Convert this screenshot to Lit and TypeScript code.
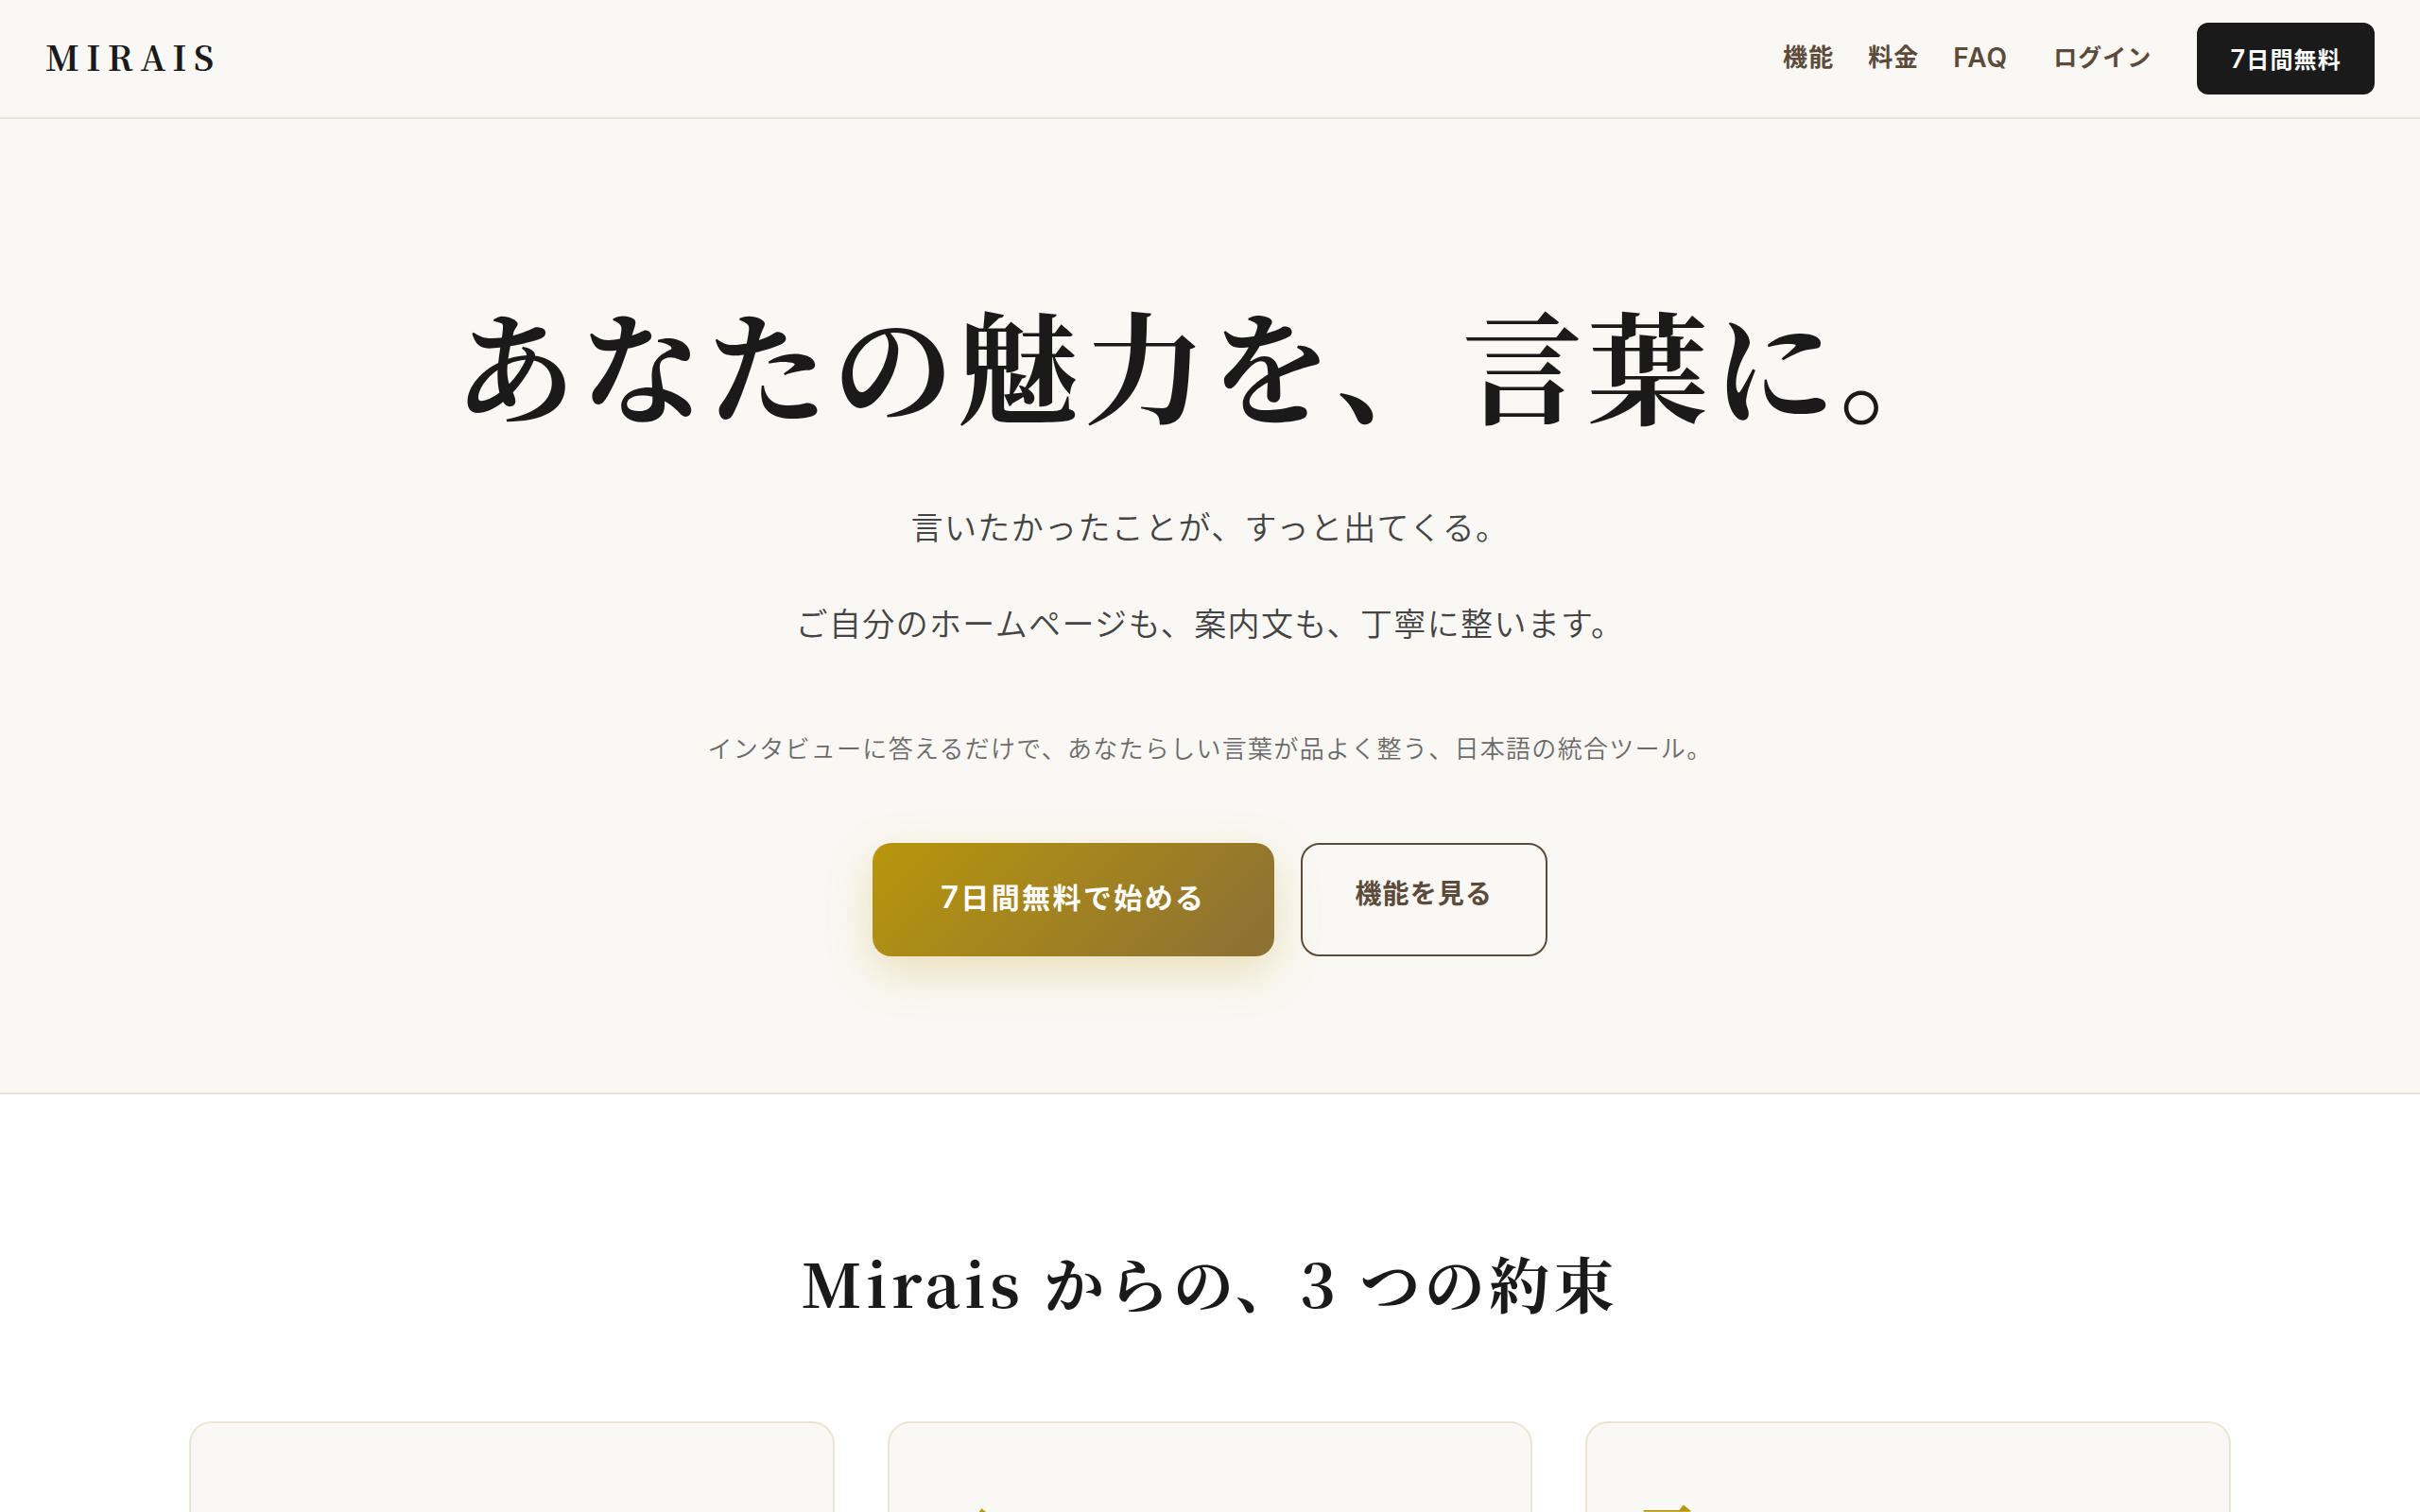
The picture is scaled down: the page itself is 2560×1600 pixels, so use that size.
import { LitElement, html, css } from "lit";
import { customElement } from "lit/decorators.js";

const PROMISES = ["一", "二", "三"];

@customElement("app-root")
export class AppRoot extends LitElement {
  static styles = css`
    :host {
      --ink: #1a1a1a;
      --brown: #5c4a3a;
      --gold: #b8960c;
      --bronze: #8b6f35;
      --paper: #faf8f4;
      --line: #ebe5d6;
      --serif: "Noto Serif CJK JP", "Liberation Serif", "Noto Sans CJK JP", serif;
      --sans: Inter, "Noto Sans CJK JP", sans-serif;
      display: block;
      height: 100vh;
      overflow: hidden;
      background: #ffffff;
      color: var(--ink);
      font-family: var(--sans);
    }
    * {
      box-sizing: border-box;
    }
    a {
      color: inherit;
      text-decoration: none;
    }
    h1,
    h2,
    p {
      margin: 0;
    }
    .header {
      display: flex;
      align-items: center;
      justify-content: space-between;
      padding: 24px 48px;
      background: var(--paper);
      border-bottom: 2px solid var(--line);
    }
    .logo {
      padding-bottom: 4px;
      font-family: var(--serif);
      font-size: 36px;
      font-weight: 700;
      line-height: 72px;
      letter-spacing: 0.2em;
    }
    .nav {
      display: flex;
      align-items: center;
      gap: 48px;
      color: var(--brown);
      font-size: 26px;
      font-weight: 600;
      line-height: 72px;
      letter-spacing: 0.04em;
    }
    .links {
      display: flex;
      gap: 36px;
    }
    .links,
    .login {
      padding-bottom: 2px;
    }
    .wide {
      font-size: 28px;
    }
    .login {
      font-size: 25px;
    }
    .trial {
      padding: 4px 35px 0;
      border-radius: 12px;
      background: var(--ink);
      color: #ffffff;
      font-size: 24px;
      letter-spacing: 0.05em;
    }
    .trial-digit {
      font-size: 27px;
      line-height: 1;
    }
    .hero {
      display: flex;
      flex-direction: column;
      align-items: center;
      padding: 168px 48px 144px;
      background: var(--paper);
      border-bottom: 2px solid var(--line);
      text-align: center;
    }
    .title {
      font-family: var(--serif);
      font-size: 128px;
      font-weight: 700;
      line-height: 180px;
      letter-spacing: 0.04em;
    }
    .lead {
      margin-top: 34px;
      color: #444444;
      font-size: 34px;
      font-weight: 350;
      line-height: 102px;
      letter-spacing: 0.04em;
    }
    .note {
      margin-top: 56px;
      color: #6b6b6b;
      font-size: 26px;
      font-weight: 350;
      line-height: 50px;
      letter-spacing: 0.05em;
    }
    .actions {
      display: flex;
      gap: 28px;
      margin-top: 74px;
    }
    .primary {
      padding: 32px 72px 36px;
      border-radius: 20px;
      background: linear-gradient(135deg, var(--gold), var(--bronze));
      box-shadow: 0 16px 48px rgba(184, 150, 12, 0.25);
      color: #ffffff;
      font-size: 30px;
      font-weight: 600;
      line-height: 52px;
      letter-spacing: 0.08em;
    }
    .primary-digit {
      font-size: 33px;
      line-height: 1;
    }
    .secondary {
      padding: 28px 56px;
      border: 2px solid var(--brown);
      border-radius: 20px;
      color: var(--brown);
      font-size: 28px;
      font-weight: 600;
      line-height: 48px;
      letter-spacing: 0.04em;
    }
    .promises {
      padding: 150px 48px;
    }
    .heading {
      font-family: var(--serif);
      font-size: 64px;
      font-weight: 700;
      line-height: 96px;
      letter-spacing: 0.07em;
      text-align: center;
    }
    .cards {
      display: grid;
      grid-template-columns: repeat(3, 1fr);
      gap: 56px;
      max-width: 2160px;
      margin: 100px auto 0;
    }
    .card {
      padding: 68px 54px;
      border: 2px solid var(--line);
      border-radius: 24px;
      background: var(--paper);
    }
    .numeral {
      color: var(--gold);
      font-family: var(--serif);
      font-size: 60px;
      font-weight: 700;
      line-height: 84px;
    }
  `;

  render() {
    return html`
      <header class="header">
        <a class="logo" href="#top">MIRAIS</a>
        <nav class="nav">
          <div class="links">
            <a href="#features">機能</a>
            <a href="#pricing">料金</a>
            <a class="wide" href="#faq">FAQ</a>
          </div>
          <a class="login" href="#login">ログイン</a>
          <a class="trial" href="#trial"><span class="trial-digit">7</span>日間無料</a>
        </nav>
      </header>
      <main>
        <section class="hero">
          <h1 class="title">あなたの魅力を、言葉に。</h1>
          <p class="lead">
            言いたかったことが、すっと出てくる。<br />ご自分のホームページも、案内文も、丁寧に整います。
          </p>
          <p class="note">インタビューに答えるだけで、あなたらしい言葉が品よく整う、日本語の統合ツール。</p>
          <div class="actions">
            <a class="primary" href="#trial"><span class="primary-digit">7</span>日間無料で始める</a>
            <a class="secondary" href="#features">機能を見る</a>
          </div>
        </section>
        <section class="promises" id="features">
          <h2 class="heading">Mirais からの、3 つの約束</h2>
          <div class="cards">
            ${PROMISES.map(
              (n) => html`<article class="card"><p class="numeral">${n}</p></article>`
            )}
          </div>
        </section>
      </main>
    `;
  }
}
